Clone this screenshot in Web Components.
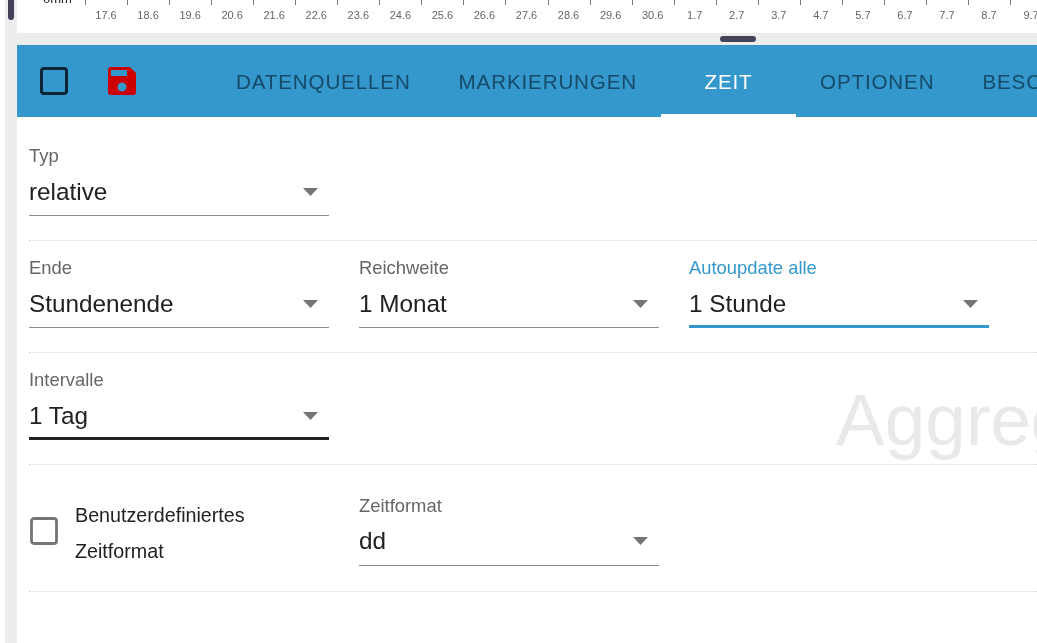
<!DOCTYPE html>
<html lang="de"><head><meta charset="utf-8">
<style>
html,body{margin:0;padding:0;height:643px;overflow:hidden;background:#fff;font-family:"Liberation Sans",Arial,sans-serif}
app-shell{height:643px}
</style></head><body>
<app-shell>
  <chart-axis slot="chart"></chart-axis>
  <tab-bar slot="tabs" active="ZEIT" tabs="DATENQUELLEN,MARKIERUNGEN,ZEIT,OPTIONEN,BESCHRIFTUNG"></tab-bar>
  <form-row><select-field label="Typ" value="relative"></select-field></form-row>
  <form-row>
    <select-field label="Ende" value="Stundenende"></select-field>
    <select-field label="Reichweite" value="1 Monat"></select-field>
    <select-field label="Autoupdate alle" value="1 Stunde" state="focus"></select-field>
  </form-row>
  <form-row watermark="Aggregation"><select-field label="Intervalle" value="1 Tag" state="dark"></select-field></form-row>
  <form-row tight>
    <check-field>Benutzerdefiniertes Zeitformat</check-field>
    <select-field label="Zeitformat" value="dd"></select-field>
  </form-row>
</app-shell>
<script>
function def(name,html,init){customElements.define(name,class extends HTMLElement{
  connectedCallback(){if(this.shadowRoot)return;const r=this.attachShadow({mode:'open'});r.innerHTML=typeof html==='function'?html(this):html;if(init)init(this,r);}
});}
def('app-shell',`<style>
:host{display:flex;background:#fff;will-change:transform}
.gutter{width:5px;flex:none}
.rail{width:12px;flex:none;background:#eceeed;position:relative}
.thumb{position:absolute;left:3px;top:-10px;width:6px;height:30px;border-radius:3px;background:#45435a}
.main{flex:1;min-width:0;display:flex;flex-direction:column;overflow:hidden;background:#eceeed}
.split{height:12px;flex:none;background:#eceeed;display:flex}
.split i{display:block;width:36px;height:6px;border-radius:3px;background:#45435a;margin:3px 0 0 703px}
.form{flex:1;padding:12px 0 0 12px;background:#fff;border-top-left-radius:4px}
</style>
<div class="gutter"></div>
<div class="rail"><div class="thumb"></div></div>
<div class="main"><slot name="chart"></slot><div class="split"><i></i></div><slot name="tabs"></slot><div class="form"><slot></slot></div></div>`);
def('chart-axis',el=>{
  const l=['17.6','18.6','19.6','20.6','21.6','22.6','23.6','24.6','25.6','26.6','27.6','28.6','29.6','30.6','1.7','2.7','3.7','4.7','5.7','6.7','7.7','8.7','9.7'];
  return `<style>
:host{display:block;height:33px;background:#fff;overflow:hidden;position:relative}
.row{display:flex;padding-left:68px;white-space:nowrap}
.c{flex:none;width:42.05px;box-sizing:border-box;height:33px;position:relative;text-align:center;font:11px/1 "Liberation Sans",Arial,sans-serif;color:#666;padding-top:10px;
 background:linear-gradient(#777,#777) 0 0/1px 5px no-repeat}
.y{position:absolute;left:26px;top:-8px;font:13px/1 "Liberation Sans",Arial,sans-serif;color:#222}
</style><span class="y">0mm</span><div class="row">${l.map(t=>`<div class="c">${t}</div>`).join('')}</div>`;
});
def('tab-bar',el=>{
  const tabs=el.getAttribute('tabs').split(','),a=el.getAttribute('active');
  return `<style>
:host{display:flex;height:72px;background:#3498cd;overflow:hidden;align-items:stretch}
.ic{flex:none;display:flex;align-items:center}
.ic svg{display:block}
.tabs{display:flex;margin-left:76px;flex:none}
.t{flex:none;box-sizing:border-box;padding:1px 24px 0;display:flex;align-items:center;justify-content:center;font:20.6px "Liberation Sans",Arial,sans-serif;letter-spacing:.85px;color:#164a68;position:relative;min-width:135px}
.t.on{color:#fff}
.t.on::after{content:"";position:absolute;left:0;right:0;bottom:0;height:3px;background:#fff}
</style>
<div class="ic" style="margin-left:23px"><svg width="28" height="28" viewBox="0 0 28 28"><rect x="1.5" y="1.5" width="25" height="25" rx="2.5" fill="none" stroke="#0c2536" stroke-width="3"/></svg></div>
<div class="ic" style="margin-left:40px"><svg width="28" height="28" viewBox="0 0 28 28"><path fill="#cc0000" d="M3 0H22L28 6V25a3 3 0 0 1-3 3H3a3 3 0 0 1-3-3V3a3 3 0 0 1 3-3ZM3 3V9H19V3ZM14 15.5a4.5 4.5 0 1 0 0 9a4.5 4.5 0 1 0 0-9Z" fill-rule="evenodd"/></svg></div>
<div class="tabs">${tabs.map(t=>`<div class="t${t===a?' on':''}">${t}</div>`).join('')}</div>`;
});
def('form-row',el=>{
  const w=el.getAttribute('watermark');
  return `<style>
:host{display:block;position:relative;height:112px;box-sizing:border-box;border-bottom:1px dotted #d4d4d4;overflow:hidden}
.r{display:flex;gap:30px;padding-top:16px}
.w{position:absolute;left:807px;top:30px;font:73px/1 "Liberation Sans",Arial,sans-serif;color:#e9e9e9;white-space:nowrap}
</style>${w?`<div class="w">${w}</div>`:''}<div class="r"><slot></slot></div>`;
},(el,r)=>{if(el.hasAttribute('tight')){el.style.height='127px';el.style.setProperty('--vb','3px');r.querySelector('.r').style.paddingTop='30px';}});
def('select-field',el=>{
  const s=el.getAttribute('state')||'';
  const lc=s==='focus'?'#3498cd':'#666';
  const b=s==='focus'?'#3498cd':s==='dark'?'#212121':'#8a8a8a';
  const bw=s?3:1;
  return `<style>
:host{display:block;width:300px;flex:none}
.l{font:18.4px/22px "Liberation Sans",Arial,sans-serif;color:${lc};height:24px}
.v{box-sizing:border-box;height:47px;padding-bottom:var(--vb,1px);box-shadow:inset 0 -${bw}px 0 ${b};display:flex;justify-content:space-between;align-items:center;font:24.3px/1 "Liberation Sans",Arial,sans-serif;color:#212121}
.v svg{display:block;margin-right:11px}
</style><div class="l">${el.getAttribute('label')}</div><div class="v"><span>${el.getAttribute('value')}</span><svg width="15" height="8" viewBox="0 0 15 8"><path d="M0 0H15L7.5 8Z" fill="#757575"/></svg></div>`;
});
def('check-field',`<style>
:host{display:flex;width:300px;flex:none;align-items:center;height:72px}
svg{flex:none;display:block;margin-left:1px}
.t{margin-left:17px;padding-top:4px;font:19.7px/36px "Liberation Sans",Arial,sans-serif;color:#212121;width:200px}
</style><svg width="28" height="28" viewBox="0 0 28 28"><rect x="1.5" y="1.5" width="25" height="25" rx="2.5" fill="none" stroke="#757575" stroke-width="2.8"/></svg><div class="t"><slot></slot></div>`);
</script>
</body></html>
